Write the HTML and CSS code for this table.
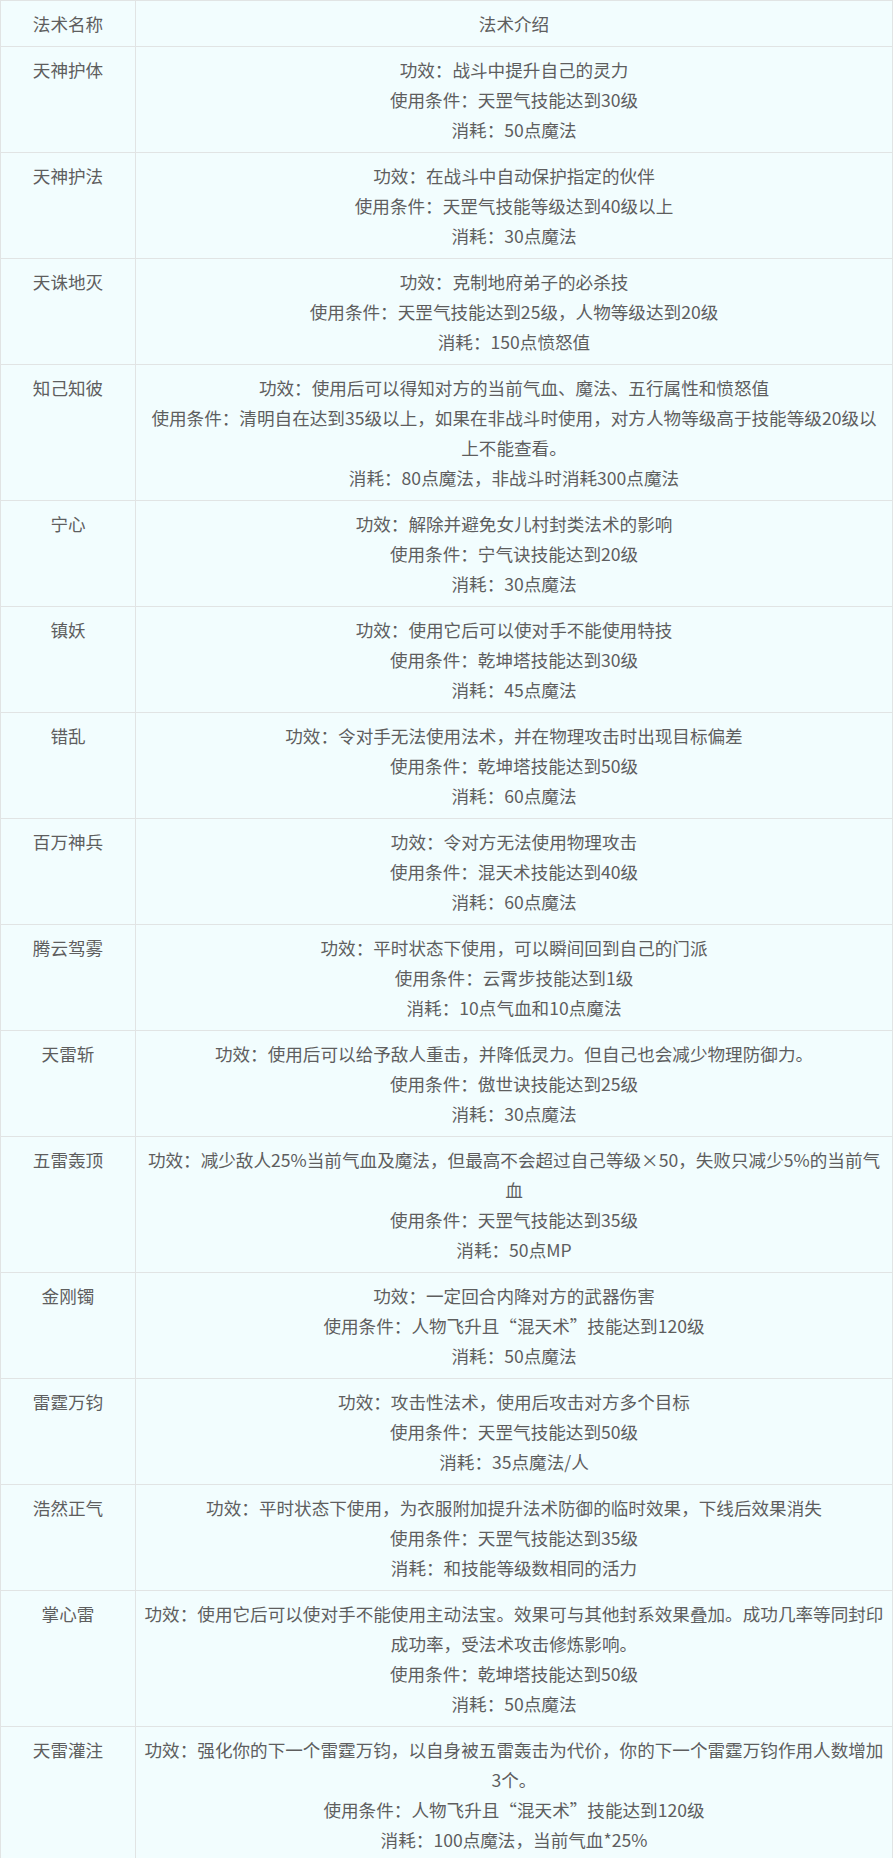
FILE: index.html
```
<!DOCTYPE html>
<html lang="zh-CN">
<head>
<meta charset="utf-8">
<title>法术</title>
<link rel="stylesheet" href="styles.css">
</head>
<body>
<table class="skills">
<colgroup><col class="col-name"><col class="col-desc"></colgroup>
<thead>
<tr><th>法术名称</th><th>法术介绍</th></tr>
</thead>
<tbody>
<tr><td>天神护体</td><td><p>功效：战斗中提升自己的灵力</p><p>使用条件：天罡气技能达到30级</p><p>消耗：50点魔法</p></td></tr>
<tr><td>天神护法</td><td><p>功效：在战斗中自动保护指定的伙伴</p><p>使用条件：天罡气技能等级达到40级以上</p><p>消耗：30点魔法</p></td></tr>
<tr><td>天诛地灭</td><td><p>功效：克制地府弟子的必杀技</p><p>使用条件：天罡气技能达到25级，人物等级达到20级</p><p>消耗：150点愤怒值</p></td></tr>
<tr><td>知己知彼</td><td><p>功效：使用后可以得知对方的当前气血、魔法、五行属性和愤怒值</p><p>使用条件：清明自在达到35级以上，如果在非战斗时使用，对方人物等级高于技能等级20级以上不能查看。</p><p>消耗：80点魔法，非战斗时消耗300点魔法</p></td></tr>
<tr><td>宁心</td><td><p>功效：解除并避免女儿村封类法术的影响</p><p>使用条件：宁气诀技能达到20级</p><p>消耗：30点魔法</p></td></tr>
<tr><td>镇妖</td><td><p>功效：使用它后可以使对手不能使用特技</p><p>使用条件：乾坤塔技能达到30级</p><p>消耗：45点魔法</p></td></tr>
<tr><td>错乱</td><td><p>功效：令对手无法使用法术，并在物理攻击时出现目标偏差</p><p>使用条件：乾坤塔技能达到50级</p><p>消耗：60点魔法</p></td></tr>
<tr><td>百万神兵</td><td><p>功效：令对方无法使用物理攻击</p><p>使用条件：混天术技能达到40级</p><p>消耗：60点魔法</p></td></tr>
<tr><td>腾云驾雾</td><td><p>功效：平时状态下使用，可以瞬间回到自己的门派</p><p>使用条件：云霄步技能达到1级</p><p>消耗：10点气血和10点魔法</p></td></tr>
<tr><td>天雷斩</td><td><p>功效：使用后可以给予敌人重击，并降低灵力。但自己也会减少物理防御力。</p><p>使用条件：傲世诀技能达到25级</p><p>消耗：30点魔法</p></td></tr>
<tr><td>五雷轰顶</td><td><p>功效：减少敌人25%当前气血及魔法，但最高不会超过自己等级×50，失败只减少5%的当前气血</p><p>使用条件：天罡气技能达到35级</p><p>消耗：50点MP</p></td></tr>
<tr><td>金刚镯</td><td><p>功效：一定回合内降对方的武器伤害</p><p>使用条件：人物飞升且“混天术”技能达到120级</p><p>消耗：50点魔法</p></td></tr>
<tr><td>雷霆万钧</td><td><p>功效：攻击性法术，使用后攻击对方多个目标</p><p>使用条件：天罡气技能达到50级</p><p>消耗：35点魔法/人</p></td></tr>
<tr><td>浩然正气</td><td><p>功效：平时状态下使用，为衣服附加提升法术防御的临时效果，下线后效果消失</p><p>使用条件：天罡气技能达到35级</p><p>消耗：和技能等级数相同的活力</p></td></tr>
<tr><td>掌心雷</td><td><p>功效：使用它后可以使对手不能使用主动法宝。效果可与其他封系效果叠加。成功几率等同封印成功率，受法术攻击修炼影响。</p><p>使用条件：乾坤塔技能达到50级</p><p>消耗：50点魔法</p></td></tr>
<tr><td>天雷灌注</td><td><p>功效：强化你的下一个雷霆万钧，以自身被五雷轰击为代价，你的下一个雷霆万钧作用人数增加3个。</p><p>使用条件：人物飞升且“混天术”技能达到120级</p><p>消耗：100点魔法，当前气血*25%</p></td></tr>
</tbody>
</table>
</body>
</html>
```

FILE: styles.css
```
html, body {
  margin: 0;
  padding: 0;
  background: #ffffff;
}
body {
  font-family: "Microsoft YaHei", "Noto Sans CJK SC", "Noto Sans", sans-serif;
  font-size: 17.6px;
  line-height: 30px;
  color: #5e5e5e;
}
.skills {
  width: 893px;
  border-collapse: collapse;
  background: #f2fdfe;
  table-layout: fixed;
}
.col-name {
  width: 135px;
}
.skills th,
.skills td {
  border: 1px solid #e1e4e4;
  padding: 8px 8px 7px;
  text-align: center;
  vertical-align: top;
  font-weight: normal;
}
.skills p {
  margin: 0;
}
```
